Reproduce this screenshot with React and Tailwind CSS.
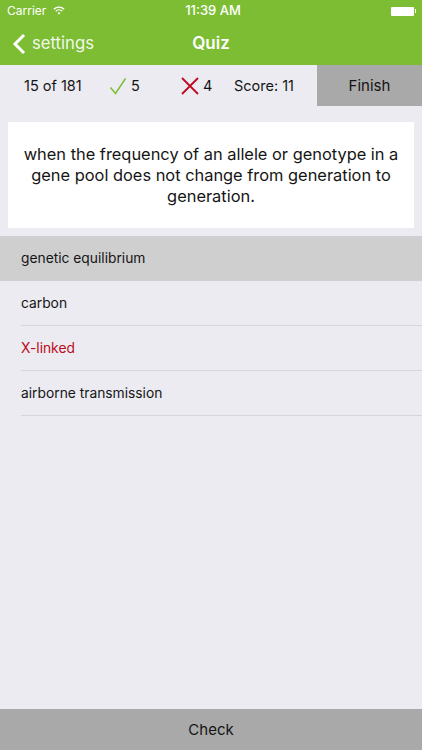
const font = "font-['Inter','Liberation_Sans',sans-serif]";

const Answer = ({ text, selected, red }) => (
  <div className={`h-[45px] flex items-center text-[13.8px] ${selected ? 'bg-[#cfcfcf] pl-[21px]' : 'ml-[21px] border-b border-[#d6d6da]'} ${red ? 'text-[#bd0a20]' : 'text-[#151515]'}`}>
    {text}
  </div>
);

const App = () => {
  return (
    <div className={`w-[422px] h-[750px] flex flex-col bg-[#ebebf1] overflow-hidden ${font}`}>
      {/* green header with status bar */}
      <div className="h-[65px] bg-[#7dbd33] text-white flex flex-col shrink-0">
        <div className="h-[22px] flex items-center justify-between pl-[7px] pr-[3px] text-[13px]">
          <div className="flex items-center gap-[7px] w-[120px] text-[12px]">
            <span>Carrier</span>
            <svg width="12" height="9" viewBox="0 0 14 10" fill="none" stroke="white" strokeWidth="1.6" className="-mt-[2px]">
              <path d="M1 3.6a8.5 8.5 0 0 1 12 0" />
              <path d="M3.2 5.8a5.4 5.4 0 0 1 7.6 0" />
              <path d="M7 9.6 5.4 7.9a2.3 2.3 0 0 1 3.2 0z" fill="white" stroke="none" />
            </svg>
          </div>
          <span className="font-medium">11:39 AM</span>
          <div className="w-[120px] flex justify-end items-center pr-[3px]">
            <div className="w-[23px] h-[9px] bg-white rounded-[1px]" />
            <div className="w-[1.5px] h-[4px] bg-white ml-[1px]" />
          </div>
        </div>
        <div className="flex-1 relative flex items-center justify-center">
          <div className="absolute left-[12px] top-[9px] flex items-center gap-[6px]">
            <svg width="14" height="22" viewBox="0 0 14 22" fill="none" stroke="white" strokeWidth="3">
              <path d="M12 2 3 11l9 9" />
            </svg>
            <span className="text-[16.7px] opacity-90">settings</span>
          </div>
          <span className="text-[17px] font-semibold">Quiz</span>
        </div>
      </div>

      {/* score row */}
      <div className="h-[41px] flex items-center text-[14.5px] text-[#151515] shrink-0">
        <span className="ml-[24px] w-[85px]">15 of 181</span>
        <svg width="18" height="18" viewBox="0 0 18 18" fill="none" stroke="#7dbd33" strokeWidth="1.5">
          <path d="M1.5 10.5 6.5 16.5 16.5 1.5" />
        </svg>
        <span className="ml-[4px] w-[50px]">5</span>
        <svg width="18" height="18" viewBox="0 0 18 18" fill="none" stroke="#bd0a20" strokeWidth="1.8">
          <path d="M1 1 17 17M17 1 1 17" />
        </svg>
        <span className="ml-[4px] w-[31px]">4</span>
        <span className="w-[83px]">Score: 11</span>
        <div className="w-[105px] h-full bg-[#a9a9a9] flex items-center justify-center text-[15px] pt-[2px]">Finish</div>
      </div>

      {/* question card */}
      <div className="mx-[8px] mt-[16px] h-[106px] bg-white flex items-center justify-center text-center px-[14px] text-[16.4px] leading-[21px] text-[#151515]">
        when the frequency of an allele or genotype in a gene pool does not change from generation to generation.
      </div>

      {/* answers */}
      <div className="mt-[8px] flex-1">
        <Answer text="genetic equilibrium" selected />
        <Answer text="carbon" />
        <Answer text="X-linked" red />
        <Answer text="airborne transmission" />
      </div>

      <div className="h-[41px] bg-[#a9a9a9] flex items-center justify-center text-[15px] pt-[1px] text-[#151515] shrink-0">Check</div>
    </div>
  );
};

export default App;
